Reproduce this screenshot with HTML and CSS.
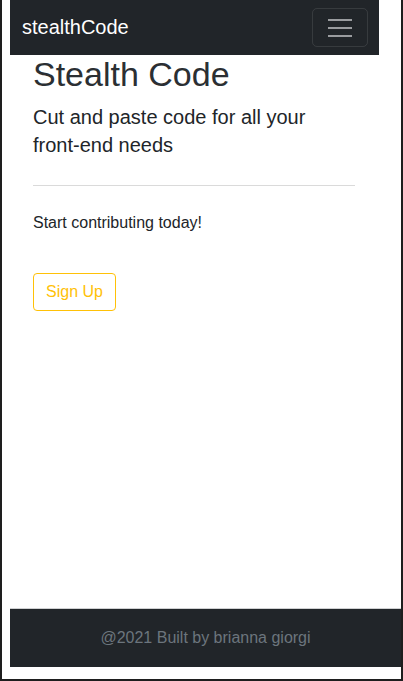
FILE: index.html
```html
<!DOCTYPE html>
<html lang="en">
<head>
<meta charset="utf-8">
<title>stealthCode</title>
<link rel="stylesheet" href="styles.css">
</head>
<body>
<div class="frame">
  <nav class="navbar">
    <span class="brand">stealthCode</span>
    <button class="toggler" aria-label="Toggle navigation">
      <svg width="24" height="18" viewBox="0 0 24 18">
        <rect x="0" y="0" width="24" height="2" fill="#9a9c9f"/>
        <rect x="0" y="8" width="24" height="2" fill="#9a9c9f"/>
        <rect x="0" y="16" width="24" height="2" fill="#9a9c9f"/>
      </svg>
    </button>
  </nav>
  <main class="jumbo">
    <h1 class="title">Stealth Code</h1>
    <p class="lead">Cut and paste code for all your front-end needs</p>
    <hr class="rule">
    <p class="cta-text">Start contributing today!</p>
    <a class="btn-outline" href="#">Sign Up</a>
  </main>
  <footer class="footer">@2021 Built by brianna giorgi</footer>
</div>
</body>
</html>
```

FILE: styles.css
```css
html, body {
  margin: 0;
  padding: 0;
  background: #ffffff;
}
body {
  font-family: "Liberation Sans", Arial, sans-serif;
  color: #212529;
}
.frame {
  width: 403px;
  height: 681px;
  box-sizing: border-box;
  border-left: 2px solid #1e1e1e;
  border-right: 2px solid #1e1e1e;
  border-bottom: 2px solid #1e1e1e;
  display: flex;
  flex-direction: column;
  overflow: hidden;
}
.navbar {
  margin-left: 8px;
  width: 369px;
  height: 55px;
  box-sizing: border-box;
  background: #212529;
  padding: 0 11px 0 12px;
  display: flex;
  align-items: center;
  justify-content: space-between;
  flex-shrink: 0;
}
.brand {
  color: #ffffff;
  font-size: 20px;
  line-height: 30px;
  padding-bottom: 2px;
}
.toggler {
  width: 56px;
  height: 39px;
  box-sizing: border-box;
  background: transparent;
  border: 1px solid rgba(255, 255, 255, 0.1);
  border-radius: 5px;
  padding: 0;
  display: flex;
  align-items: center;
  justify-content: center;
}
.toggler svg {
  display: block;
  margin-top: 1px;
}
.jumbo {
  flex: 1;
  padding: 0 46px 0 31px;
}
.title {
  margin: 0;
  font-size: 34px;
  font-weight: 300;
  line-height: 38px;
  color: #2b2f33;
}
.lead {
  margin: 10px 0 0;
  font-size: 20px;
  font-weight: 300;
  line-height: 28px;
  color: #212529;
}
.rule {
  margin: 26px 0 0;
  border: 0;
  border-top: 1px solid #dadada;
  height: 0;
}
.cta-text {
  margin: 25px 0 0;
  font-size: 16px;
  line-height: 24px;
  color: #212529;
}
.btn-outline {
  display: inline-block;
  margin-top: 38px;
  padding: 6px 12px;
  font-size: 16px;
  line-height: 24px;
  color: #ffc107;
  border: 1px solid #ffc107;
  border-radius: 4px;
  text-decoration: none;
}
.footer {
  margin-left: 8px;
  margin-bottom: 12px;
  height: 59px;
  box-sizing: border-box;
  background: #212529;
  border-top: 1px solid #cfd0d2;
  color: #6c757d;
  font-size: 16px;
  line-height: 24px;
  text-align: center;
  padding-top: 17px;
  flex-shrink: 0;
}
```
